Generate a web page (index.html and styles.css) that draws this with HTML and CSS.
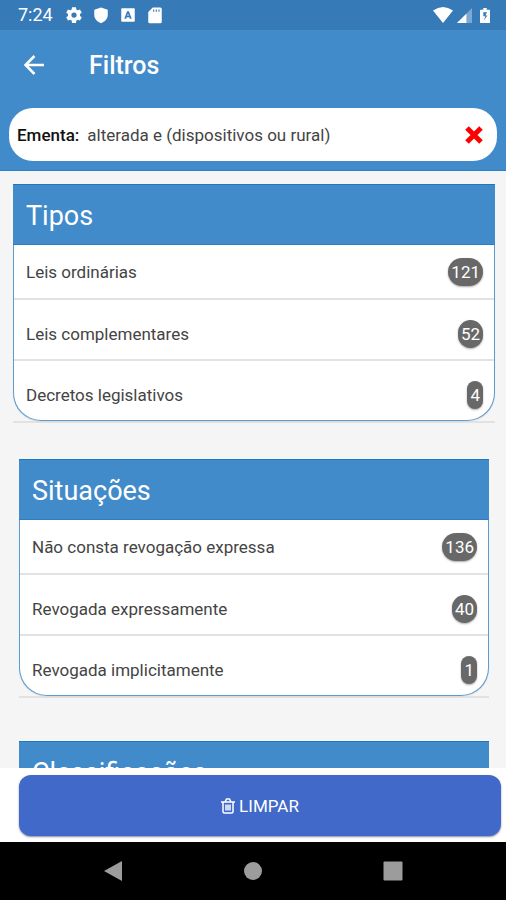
FILE: index.html
```html
<!DOCTYPE html>
<html lang="pt-BR">
<head>
<meta charset="utf-8">
<meta name="viewport" content="width=device-width, initial-scale=1">
<title>Filtros</title>
<link rel="stylesheet" href="styles.css">
</head>
<body>
<div class="status">
  <span class="time">7:24</span>
  <svg class="icon-status" viewBox="0 0 24 24"><path fill-rule="evenodd" d="M20 13.200a8 8 0 0 0 0-2.400l2.400-1.900-2.400-4.200-2.900 1.100a8 8 0 0 0-2-1.200L14.700 1.500H9.300L8.900 4.600a8 8 0 0 0-2 1.200L4 4.700 1.600 8.900 4 10.800a8 8 0 0 0 0 2.400l-2.400 1.900L4 19.300l2.900-1.100a8 8 0 0 0 2 1.200l.4 3.100h5.400l.4-3.100a8 8 0 0 0 2-1.200l2.900 1.100 2.400-4.200zM12 15.500a3.500 3.500 0 1 1 0-7 3.500 3.500 0 0 1 0 7z"/></svg>
  <svg class="icon-status" viewBox="0 0 24 24"><path d="M12 2L21 5V12c0 5-3.800 9-9 11-5.200-2-9-6-9-11V5z"/></svg>
  <svg class="icon-status" viewBox="0 0 24 24"><path fill-rule="evenodd" d="M4 3h16q1 0 1 1v16q0 1-1 1H4q-1 0-1-1V4q0-1 1-1zM7 17h2.500l.8-2h3.400l.8 2H17L13.200 7h-2.400zM11 13l1-3 1 3z"/></svg>
  <svg class="icon-status" viewBox="0 0 24 24"><path fill-rule="evenodd" d="M9 2h10q2 0 2 2v17q0 2-2 2H5q-2 0-2-2V8zM9.500 4.500v3H11v-3zM13 4.500v3h1.500v-3zM16.500 4.500v3H18v-3z"/></svg>
  <span class="signals">
    <svg class="icon-wifi" viewBox="0 0 20 16"><path d="M0 3.500Q10-3.500 20 3.500L10 16z"/></svg>
    <svg class="icon-cell" viewBox="0 0 16 16"><path opacity=".35" d="M0 16L16 0v16z"/><path d="M0 16L10 6v10z"/></svg>
    <svg class="icon-battery" viewBox="0 0 12 18"><path fill-rule="evenodd" d="M4 0h4v2h3q1 0 1 1v14q0 1-1 1H1q-1 0-1-1V3q0-1 1-1h3zM4 5v5h2.500l-2 5L9 9H6.500L8.500 5z"/></svg>
  </span>
</div>
<header class="top">
  <div class="bar">
    <button class="back" aria-label="Voltar"><svg viewBox="0 0 20 20"><path d="M20 10H2M10.500 1L1.500 10l9 9"/></svg></button>
    <h1>Filtros</h1>
  </div>
  <div class="query">
    <strong>Ementa:</strong>
    <span class="terms">alterada e (dispositivos ou rural)</span>
    <button class="remove" aria-label="Remover"><svg viewBox="0 0 18 18"><path d="M2 2l14 14M16 2L2 16"/></svg></button>
  </div>
</header>
<main>
  <section class="panel wide">
    <h2>Tipos</h2>
    <ul>
      <li><span>Leis ordinárias</span><b>121</b></li>
      <li><span>Leis complementares</span><b>52</b></li>
      <li><span>Decretos legislativos</span><b>4</b></li>
    </ul>
  </section>
  <section class="panel">
    <h2>Situações</h2>
    <ul>
      <li><span>Não consta revogação expressa</span><b>136</b></li>
      <li><span>Revogada expressamente</span><b>40</b></li>
      <li><span>Revogada implicitamente</span><b>1</b></li>
    </ul>
  </section>
  <section class="panel">
    <h2>Classificações</h2>
  </section>
</main>
<footer class="actions">
  <button class="clear"><svg viewBox="0 0 14 16"><path d="M0 4h14M4 4l1.500-3h3L10 4M2 4v9.500q0 1.500 1.500 1.500h7q1.500 0 1.500-1.500V4M5 6.500v6M7 6.500v6M9 6.500v6"/></svg>LIMPAR</button>
</footer>
<nav class="system">
  <button aria-label="Anterior"><svg viewBox="0 0 20 20"><path d="M1 10L19 0v20z"/></svg></button>
  <button aria-label="Início"><svg viewBox="0 0 20 20"><circle cx="10" cy="10" r="9"/></svg></button>
  <button aria-label="Recentes"><svg viewBox="0 0 20 20"><rect x="0.500" y="0.500" width="19" height="19" rx="1"/></svg></button>
</nav>
</body>
</html>
```
FILE: styles.css
```css
* { box-sizing: border-box; }
body {
  margin: 0;
  height: 100vh;
  display: flex;
  flex-direction: column;
  background: #f5f5f5;
  color: #444;
  font-family: Roboto, "Liberation Sans", sans-serif;
  overflow: hidden;
}
button { border: 0; padding: 0; background: none; font: inherit; }
svg { display: block; }
h1, h2, ul { margin: 0; padding: 0; }

.status {
  flex: none;
  display: flex;
  align-items: center;
  gap: 9px;
  height: 30px;
  padding: 0 16px 0 18px;
  background: #367ab8;
  color: #fff;
  fill: #fff;
}
.time { font-size: 18px; font-weight: 400; line-height: 32px; margin-right: 3px; }
.icon-status { width: 18px; height: 18px; }
.signals { display: flex; align-items: center; gap: 4px; margin-left: auto; }
.icon-wifi { width: 20px; height: 16px; }
.icon-cell { width: 15px; height: 15px; }
.icon-battery { width: 10px; height: 17px; margin-left: 4px; }

.top {
  flex: none;
  padding: 0 9px 9px;
  background: #428bca;
  border-bottom: 1px solid #2d7fc4;
}
.bar { display: flex; align-items: center; height: 78px; padding: 0 14px 8px; }
.back { width: 22px; margin-right: 44px; }
.back svg { width: 22px; height: 20px; fill: none; stroke: #fff; stroke-width: 2.5; }
h1 { padding-top: 2px; color: #fff; font-size: 25px; font-weight: 500; line-height: 30px; }
.query {
  display: flex;
  align-items: center;
  gap: 8px;
  height: 53px;
  padding: 0 14px 0 8px;
  border-radius: 24px;
  background: #fff;
  font-size: 17px;
}
.query strong { color: #111; font-weight: 500; }
.remove { margin-left: auto; }
.remove svg { width: 18px; height: 18px; stroke: #f00; stroke-width: 5; }

main {
  flex: 1;
  min-height: 0;
  overflow: hidden;
  padding: 13px 17px 0 19px;
}
.panel { margin-bottom: 43px; border-bottom: 2px solid #e2e2e2; }
.wide { margin: 0 -6px 36px; }
h2 {
  height: 61px;
  padding-left: 13px;
  border-top: 1px solid #1d79bd;
  border-bottom: 1px solid #2d7fc4;
  background: #428bca;
  color: #fff;
  font-size: 27px;
  font-weight: 400;
  line-height: 62px;
}
ul {
  list-style: none;
  border: 1px solid #5c9bd0;
  border-top: 0;
  border-radius: 0 0 28px 28px;
  background: #fff;
  box-shadow: 0 1px 1px #dcdcdc;
  overflow: hidden;
}
li {
  display: flex;
  align-items: center;
  justify-content: space-between;
  height: 61px;
  padding: 8px 11px 0 12px;
  border-bottom: 2px solid #e2e2e2;
  font-size: 17px;
}
li:first-child { height: 55px; padding-top: 1px; }
li:last-child { height: 59px; border-bottom: 0; }
li b {
  padding: 0 3px;
  border-radius: 14px;
  background: #686868;
  box-shadow: 0 1px 2px #aaa;
  color: #fff;
  font-weight: 400;
  line-height: 28px;
}

.actions {
  flex: none;
  padding: 7px 5px 6px 19px;
  background: #fff;
}
.clear {
  display: flex;
  align-items: center;
  justify-content: center;
  gap: 4px;
  width: 100%;
  height: 61px;
  border-radius: 12px;
  background: #4169ca;
  box-shadow: 0 1px 2px #8888a0;
  color: #fff;
  font-size: 17px;
}
.clear svg { width: 14px; height: 16px; fill: none; stroke: #fff; stroke-width: 1.5; }

.system {
  flex: none;
  display: flex;
  justify-content: center;
  gap: 120px;
  height: 58px;
  background: #000;
  fill: #9c9c9c;
}
.system svg { width: 20px; height: 20px; }
```
